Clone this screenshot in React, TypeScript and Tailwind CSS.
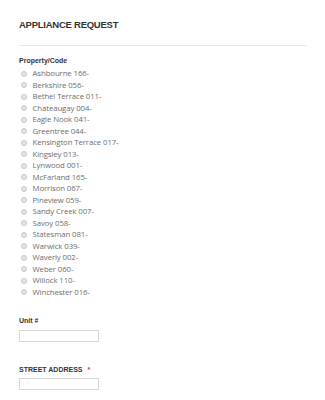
const properties = [
  "Ashbourne 166-",
  "Berkshire 056-",
  "Bethel Terrace 011-",
  "Chateaugay 004-",
  "Eagle Nook 041-",
  "Greentree 044-",
  "Kensington Terrace 017-",
  "Kingsley 013-",
  "Lynwood 001-",
  "McFarland 165-",
  "Morrison 067-",
  "Pineview 059-",
  "Sandy Creek 007-",
  "Savoy 058-",
  "Statesman 081-",
  "Warwick 039-",
  "Waverly 002-",
  "Weber 060-",
  "Willock 110-",
  "Winchester 016-",
];

function FieldLabel({ text, required }: { text: string; required?: boolean }) {
  return (
    <div className="whitespace-nowrap text-[7px] font-bold leading-[10px] text-[#333]">
      {text}
      {required && <span className="ml-[5px] text-[#e53935]">*</span>}
    </div>
  );
}

export default function App() {
  return (
    <div className="min-h-[400px] w-[325px] bg-white pl-[19px] pr-[18px] font-['Liberation_Sans',Arial,sans-serif]">
      <h1 className="pt-[19px] text-[9.5px] font-bold leading-[12px] tracking-[-0.25px] text-[#333]">
        APPLIANCE REQUEST
      </h1>
      <div className="mt-[14px] h-px bg-[#e8e8e8]" />

      <div className="mt-[10px]">
        <FieldLabel text="Property/Code" />
        <ul className="mt-[2px]">
          {properties.map((p) => (
            <li
              key={p}
              className="flex items-center whitespace-nowrap font-['Open_Sans',sans-serif] text-[7.8px] leading-[11.5px] tracking-[-0.1px] text-[#6e6e6e]"
            >
              <span className="ml-[1.5px] mr-[6px] h-[6px] w-[6px] shrink-0 rounded-full border border-[#c8c8c8] bg-[#e4e4e4]" />
              {p}
            </li>
          ))}
        </ul>
      </div>

      <div className="mt-[18px]">
        <FieldLabel text="Unit #" />
        <input
          type="text"
          className="mt-[4px] block h-[12px] w-[80px] border border-[#d6d6d6] bg-white outline-none"
        />
      </div>

      <div className="mt-[23px]">
        <FieldLabel text="STREET ADDRESS" required />
        <input
          type="text"
          className="mt-[3px] block h-[12px] w-[80px] border border-[#d6d6d6] bg-white outline-none"
        />
      </div>
    </div>
  );
}
